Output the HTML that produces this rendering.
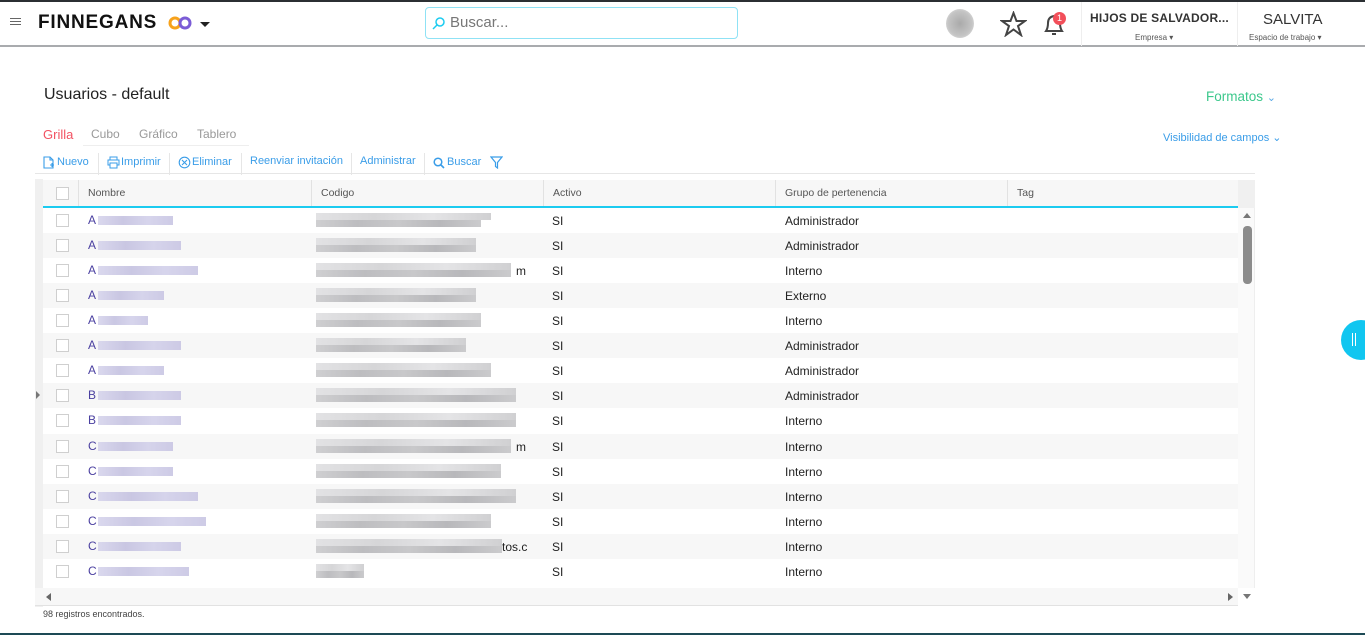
<!DOCTYPE html>
<html><head><meta charset="utf-8"><style>
*{box-sizing:border-box;margin:0;padding:0}
body{width:1365px;height:635px;overflow:hidden;background:#fff;font-family:"Liberation Sans",sans-serif;position:relative}
.top{position:absolute;left:0;top:0;width:1365px;height:47px;border-top:2px solid #2b2f33;background:#fff;border-bottom:2px solid #a9abae}
.abs{position:absolute}
.hdr{position:absolute;top:180px;height:28px;background:#f7f7f7;border-bottom:2px solid #1ccbf0}
.th{position:absolute;top:0;height:26px;line-height:26px;font-size:10.5px;color:#555;padding-left:9px;border-left:1px solid #e2e2e2}
.row{position:absolute;left:43px;width:1195px;height:25px}
.row.g{background:#f7f7f7}
.cb{position:absolute;left:13px;top:6px;width:13px;height:13px;border:1px solid #cfcfcf;background:#fff}
.nm{position:absolute;left:45px;top:5px;font-size:12px;color:#4a3fa0}
.nb{position:absolute;top:8px;height:9px;background:linear-gradient(90deg,#d6d4ec,#c4c1e0,#d2d0ea,#c8c5e3);opacity:.9}
.cd1{position:absolute;left:273px;top:5px;height:7px;background:linear-gradient(90deg,#e2e2e4,#d6d6d8,#e4e4e6,#d0d0d2)}
.cd2{position:absolute;left:273px;top:12px;height:7px;background:linear-gradient(90deg,#cfcfd1,#bdbdc0,#c8c8ca,#b8b8bb,#cbcbcd)}
.t{position:absolute;top:6px;font-size:12px;color:#222}
</style></head><body>
<div class="top">
 <div class="abs" style="left:10px;top:16px;width:11px;height:1px;background:#666;box-shadow:0 3px 0 #666,0 6px 0 #666"></div>
 <div class="abs" style="left:38px;top:10px;font-size:19px;font-weight:bold;letter-spacing:.8px;color:#111">FINNEGANS</div>
 <svg class="abs" style="left:168px;top:13px" width="26" height="16"><circle cx="7" cy="8" r="5" fill="none" stroke="#f7a21b" stroke-width="3"/><circle cx="17" cy="8" r="5" fill="none" stroke="#7b5cd6" stroke-width="3"/></svg>
 <div class="abs" style="left:200px;top:20px;border-left:5px solid transparent;border-right:5px solid transparent;border-top:5px solid #222"></div>
 <div class="abs" style="left:425px;top:5px;width:313px;height:32px;border:1px solid #8fe2f5;border-radius:4px"></div>
 <svg class="abs" style="left:432px;top:14px" width="14" height="14"><circle cx="8" cy="6" r="4" fill="none" stroke="#1ccbf0" stroke-width="1.5"/><line x1="5" y1="9" x2="1" y2="13" stroke="#1ccbf0" stroke-width="1.5"/></svg>
 <div class="abs" style="left:450px;top:12px;font-size:15px;color:#777">Buscar...</div>
 <div class="abs" style="left:946px;top:7px;width:28px;height:29px;border-radius:50%;background:radial-gradient(#aaa,#c4c4c4 60%,#f2f2f2)"></div>
 <svg class="abs" style="left:1000px;top:9px" width="27" height="26"><polygon points="13.5,2 16.5,10 25,10 18,15 21,24 13.5,18.5 6,24 9,15 2,10 10.5,10" fill="none" stroke="#444" stroke-width="2"/></svg>
 <svg class="abs" style="left:1042px;top:10px" width="24" height="26"><path d="M4 19 Q6 16 6 11 Q6 5 12 4 Q18 5 18 11 Q18 16 20 19 Z" fill="none" stroke="#444" stroke-width="2"/><rect x="10" y="21" width="4" height="2" fill="#444"/></svg>
 <div class="abs" style="left:1053px;top:10px;width:13px;height:13px;border-radius:50%;background:#f24f5a;color:#fff;font-size:9px;text-align:center;line-height:13px">1</div>
 <div class="abs" style="left:1081px;top:0;width:1px;height:44px;background:#eee"></div>
 <div class="abs" style="left:1090px;top:9px;font-size:12px;font-weight:bold;color:#333;letter-spacing:.2px">HIJOS DE SALVADOR...</div>
 <div class="abs" style="left:1135px;top:31px;font-size:8px;color:#555">Empresa ▾</div>
 <div class="abs" style="left:1237px;top:0;width:1px;height:44px;background:#eee"></div>
 <div class="abs" style="left:1263px;top:9px;font-size:15px;color:#333">SALVITA</div>
 <div class="abs" style="left:1249px;top:31px;font-size:8px;color:#555">Espacio de trabajo ▾</div>
</div>
<div class="abs" style="left:44px;top:86px;font-size:16px;color:#222">Usuarios - default</div>
<div class="abs" style="left:1206px;top:89px;font-size:13.5px;color:#3cc88c">Formatos <span style="color:#5aa9e6;font-size:11px">⌄</span></div>
<div class="abs" style="left:43px;top:127px;font-size:13px;color:#f25262">Grilla</div>
<div class="abs" style="left:91px;top:127px;font-size:12px;color:#999">Cubo</div>
<div class="abs" style="left:139px;top:127px;font-size:12px;color:#999">Gráfico</div>
<div class="abs" style="left:197px;top:127px;font-size:12px;color:#999">Tablero</div>
<div class="abs" style="left:83px;top:145px;width:166px;height:1px;background:#eee"></div>
<div class="abs" style="left:1163px;top:131px;font-size:11px;color:#3a9de8">Visibilidad de campos ⌄</div>
<div class="abs" style="left:43px;top:156px;font-size:11px;color:#3a9de8;white-space:nowrap">
<svg style="position:absolute;left:0;top:0" width="12" height="13"><path d="M1 1H7L10 4V12H1Z M7 1V4H10" fill="none" stroke="#3a9de8" stroke-width="1.1"/><path d="M7 9H11M9 7V11" stroke="#3a9de8" stroke-width="1.1"/></svg>
<span style="position:absolute;left:14px">Nuevo</span>
<span style="position:absolute;left:55px;top:-3px;width:1px;height:22px;background:#e6e6e6"></span>
<svg style="position:absolute;left:64px;top:0" width="13" height="13"><rect x="3" y="1" width="7" height="3" fill="none" stroke="#3a9de8"/><rect x="1" y="4" width="11" height="5" fill="none" stroke="#3a9de8"/><rect x="3" y="7" width="7" height="5" fill="#fff" stroke="#3a9de8"/></svg>
<span style="position:absolute;left:78px">Imprimir</span>
<span style="position:absolute;left:126px;top:-3px;width:1px;height:22px;background:#e6e6e6"></span>
<svg style="position:absolute;left:135px;top:0" width="13" height="13"><circle cx="6.5" cy="6.5" r="5.3" fill="none" stroke="#3a9de8" stroke-width="1.1"/><path d="M4 4L9 9M9 4L4 9" stroke="#3a9de8" stroke-width="1.1"/></svg>
<span style="position:absolute;left:149px">Eliminar</span>
<span style="position:absolute;left:198px;top:-3px;width:1px;height:22px;background:#e6e6e6"></span>
<span style="position:absolute;left:207px;top:-1px">Reenviar invitación</span>
<span style="position:absolute;left:308px;top:-3px;width:1px;height:22px;background:#e6e6e6"></span>
<span style="position:absolute;left:317px;top:-1px">Administrar</span>
<span style="position:absolute;left:381px;top:-3px;width:1px;height:22px;background:#e6e6e6"></span>
<svg style="position:absolute;left:390px;top:1px" width="12" height="12"><circle cx="5" cy="5" r="3.8" fill="none" stroke="#3a9de8" stroke-width="1.5"/><line x1="8" y1="8" x2="11" y2="11" stroke="#3a9de8" stroke-width="1.6"/></svg>
<span style="position:absolute;left:404px">Buscar</span>
<svg style="position:absolute;left:447px;top:0" width="13" height="13"><path d="M1 1 H12 L7.5 6.5 V12 L5.5 10.5 V6.5 Z" fill="none" stroke="#3a9de8" stroke-width="1.2"/></svg>
</div>
<div class="abs" style="left:35px;top:173px;width:1220px;height:1px;background:#e6e6e6"></div>
<div class="abs" style="left:35px;top:179px;width:8px;height:428px;background:#f0f0f0"></div>
<div class="abs" style="left:36px;top:391px;border-top:4px solid transparent;border-bottom:4px solid transparent;border-left:4px solid #777"></div>
<div class="hdr" style="left:43px;width:1195px">
 <div class="cb" style="top:7px"></div>
 <div class="th" style="left:35px">Nombre</div>
 <div class="th" style="left:268px">Codigo</div>
 <div class="th" style="left:500px">Activo</div>
 <div class="th" style="left:732px">Grupo de pertenencia</div>
 <div class="th" style="left:964px">Tag</div>
</div>
<div class="abs" style="left:1238px;top:180px;width:17px;height:28px;background:#f0f0f0"></div>
<div class="abs" style="left:1238px;top:208px;width:17px;height:380px;background:#fafafa;border-right:1px solid #eee"></div>
<div class="abs" style="left:1243px;top:213px;border-left:4px solid transparent;border-right:4px solid transparent;border-bottom:5px solid #777"></div>
<div class="abs" style="left:1243px;top:226px;width:9px;height:58px;border-radius:4px;background:#8c8c8c"></div>
<div class="abs" style="left:1243px;top:594px;border-left:4px solid transparent;border-right:4px solid transparent;border-top:5px solid #777"></div>

<div class="row" style="top:208px"><div class="cb"></div><div class="nm">A</div><div class="nb" style="left:55px;width:75px"></div><div class="cd1" style="width:175px"></div><div class="cd2" style="width:165px"></div><div class="t" style="left:509px">SI</div><div class="t" style="left:742px">Administrador</div></div>
<div class="row g" style="top:233px"><div class="cb"></div><div class="nm">A</div><div class="nb" style="left:55px;width:83px"></div><div class="cd1" style="width:160px"></div><div class="cd2" style="width:160px"></div><div class="t" style="left:509px">SI</div><div class="t" style="left:742px">Administrador</div></div>
<div class="row" style="top:258px"><div class="cb"></div><div class="nm">A</div><div class="nb" style="left:55px;width:100px"></div><div class="cd1" style="width:195px"></div><div class="cd2" style="width:195px"></div><div class="t" style="left:473px">m</div><div class="t" style="left:509px">SI</div><div class="t" style="left:742px">Interno</div></div>
<div class="row g" style="top:283px"><div class="cb"></div><div class="nm">A</div><div class="nb" style="left:55px;width:66px"></div><div class="cd1" style="width:160px"></div><div class="cd2" style="width:160px"></div><div class="t" style="left:509px">SI</div><div class="t" style="left:742px">Externo</div></div>
<div class="row" style="top:308px"><div class="cb"></div><div class="nm">A</div><div class="nb" style="left:55px;width:50px"></div><div class="cd1" style="width:165px"></div><div class="cd2" style="width:165px"></div><div class="t" style="left:509px">SI</div><div class="t" style="left:742px">Interno</div></div>
<div class="row g" style="top:333px"><div class="cb"></div><div class="nm">A</div><div class="nb" style="left:55px;width:83px"></div><div class="cd1" style="width:150px"></div><div class="cd2" style="width:150px"></div><div class="t" style="left:509px">SI</div><div class="t" style="left:742px">Administrador</div></div>
<div class="row" style="top:358px"><div class="cb"></div><div class="nm">A</div><div class="nb" style="left:55px;width:66px"></div><div class="cd1" style="width:175px"></div><div class="cd2" style="width:175px"></div><div class="t" style="left:509px">SI</div><div class="t" style="left:742px">Administrador</div></div>
<div class="row g" style="top:383px"><div class="cb"></div><div class="nm">B</div><div class="nb" style="left:55px;width:83px"></div><div class="cd1" style="width:200px"></div><div class="cd2" style="width:200px"></div><div class="t" style="left:509px">SI</div><div class="t" style="left:742px">Administrador</div></div>
<div class="row" style="top:408px"><div class="cb"></div><div class="nm">B</div><div class="nb" style="left:55px;width:83px"></div><div class="cd1" style="width:200px"></div><div class="cd2" style="width:200px"></div><div class="t" style="left:509px">SI</div><div class="t" style="left:742px">Interno</div></div>
<div class="row g" style="top:434px"><div class="cb"></div><div class="nm">C</div><div class="nb" style="left:55px;width:75px"></div><div class="cd1" style="width:195px"></div><div class="cd2" style="width:195px"></div><div class="t" style="left:473px">m</div><div class="t" style="left:509px">SI</div><div class="t" style="left:742px">Interno</div></div>
<div class="row" style="top:459px"><div class="cb"></div><div class="nm">C</div><div class="nb" style="left:55px;width:75px"></div><div class="cd1" style="width:185px"></div><div class="cd2" style="width:185px"></div><div class="t" style="left:509px">SI</div><div class="t" style="left:742px">Interno</div></div>
<div class="row g" style="top:484px"><div class="cb"></div><div class="nm">C</div><div class="nb" style="left:55px;width:100px"></div><div class="cd1" style="width:200px"></div><div class="cd2" style="width:200px"></div><div class="t" style="left:509px">SI</div><div class="t" style="left:742px">Interno</div></div>
<div class="row" style="top:509px"><div class="cb"></div><div class="nm">C</div><div class="nb" style="left:55px;width:108px"></div><div class="cd1" style="width:175px"></div><div class="cd2" style="width:175px"></div><div class="t" style="left:509px">SI</div><div class="t" style="left:742px">Interno</div></div>
<div class="row g" style="top:534px"><div class="cb"></div><div class="nm">C</div><div class="nb" style="left:55px;width:83px"></div><div class="cd1" style="width:186px"></div><div class="cd2" style="width:186px"></div><div class="t" style="left:459px">tos.c</div><div class="t" style="left:509px">SI</div><div class="t" style="left:742px">Interno</div></div>
<div class="row" style="top:559px"><div class="cb"></div><div class="nm">C</div><div class="nb" style="left:55px;width:91px"></div><div class="cd1" style="width:48px"></div><div class="cd2" style="width:48px"></div><div class="t" style="left:509px">SI</div><div class="t" style="left:742px">Interno</div></div>
<div class="abs" style="left:35px;top:588px;width:1203px;height:18px;background:#f7f7f7;border-bottom:1px solid #e2e2e2"></div>
<div class="abs" style="left:46px;top:593px;border-top:4px solid transparent;border-bottom:4px solid transparent;border-right:5px solid #666"></div>
<div class="abs" style="left:1228px;top:593px;border-top:4px solid transparent;border-bottom:4px solid transparent;border-left:5px solid #666"></div>
<div class="abs" style="left:43px;top:609px;font-size:9px;color:#444">98 registros encontrados.</div>
<div class="abs" style="left:1341px;top:320px;width:40px;height:40px;border-radius:50%;background:#11c6f0"></div>
<div class="abs" style="left:1352px;top:333px;width:1px;height:13px;background:#fff;box-shadow:3px 0 0 #fff"></div>
<div class="abs" style="left:0;top:633px;width:1365px;height:2px;background:#1d4a55"></div>
</body></html>
